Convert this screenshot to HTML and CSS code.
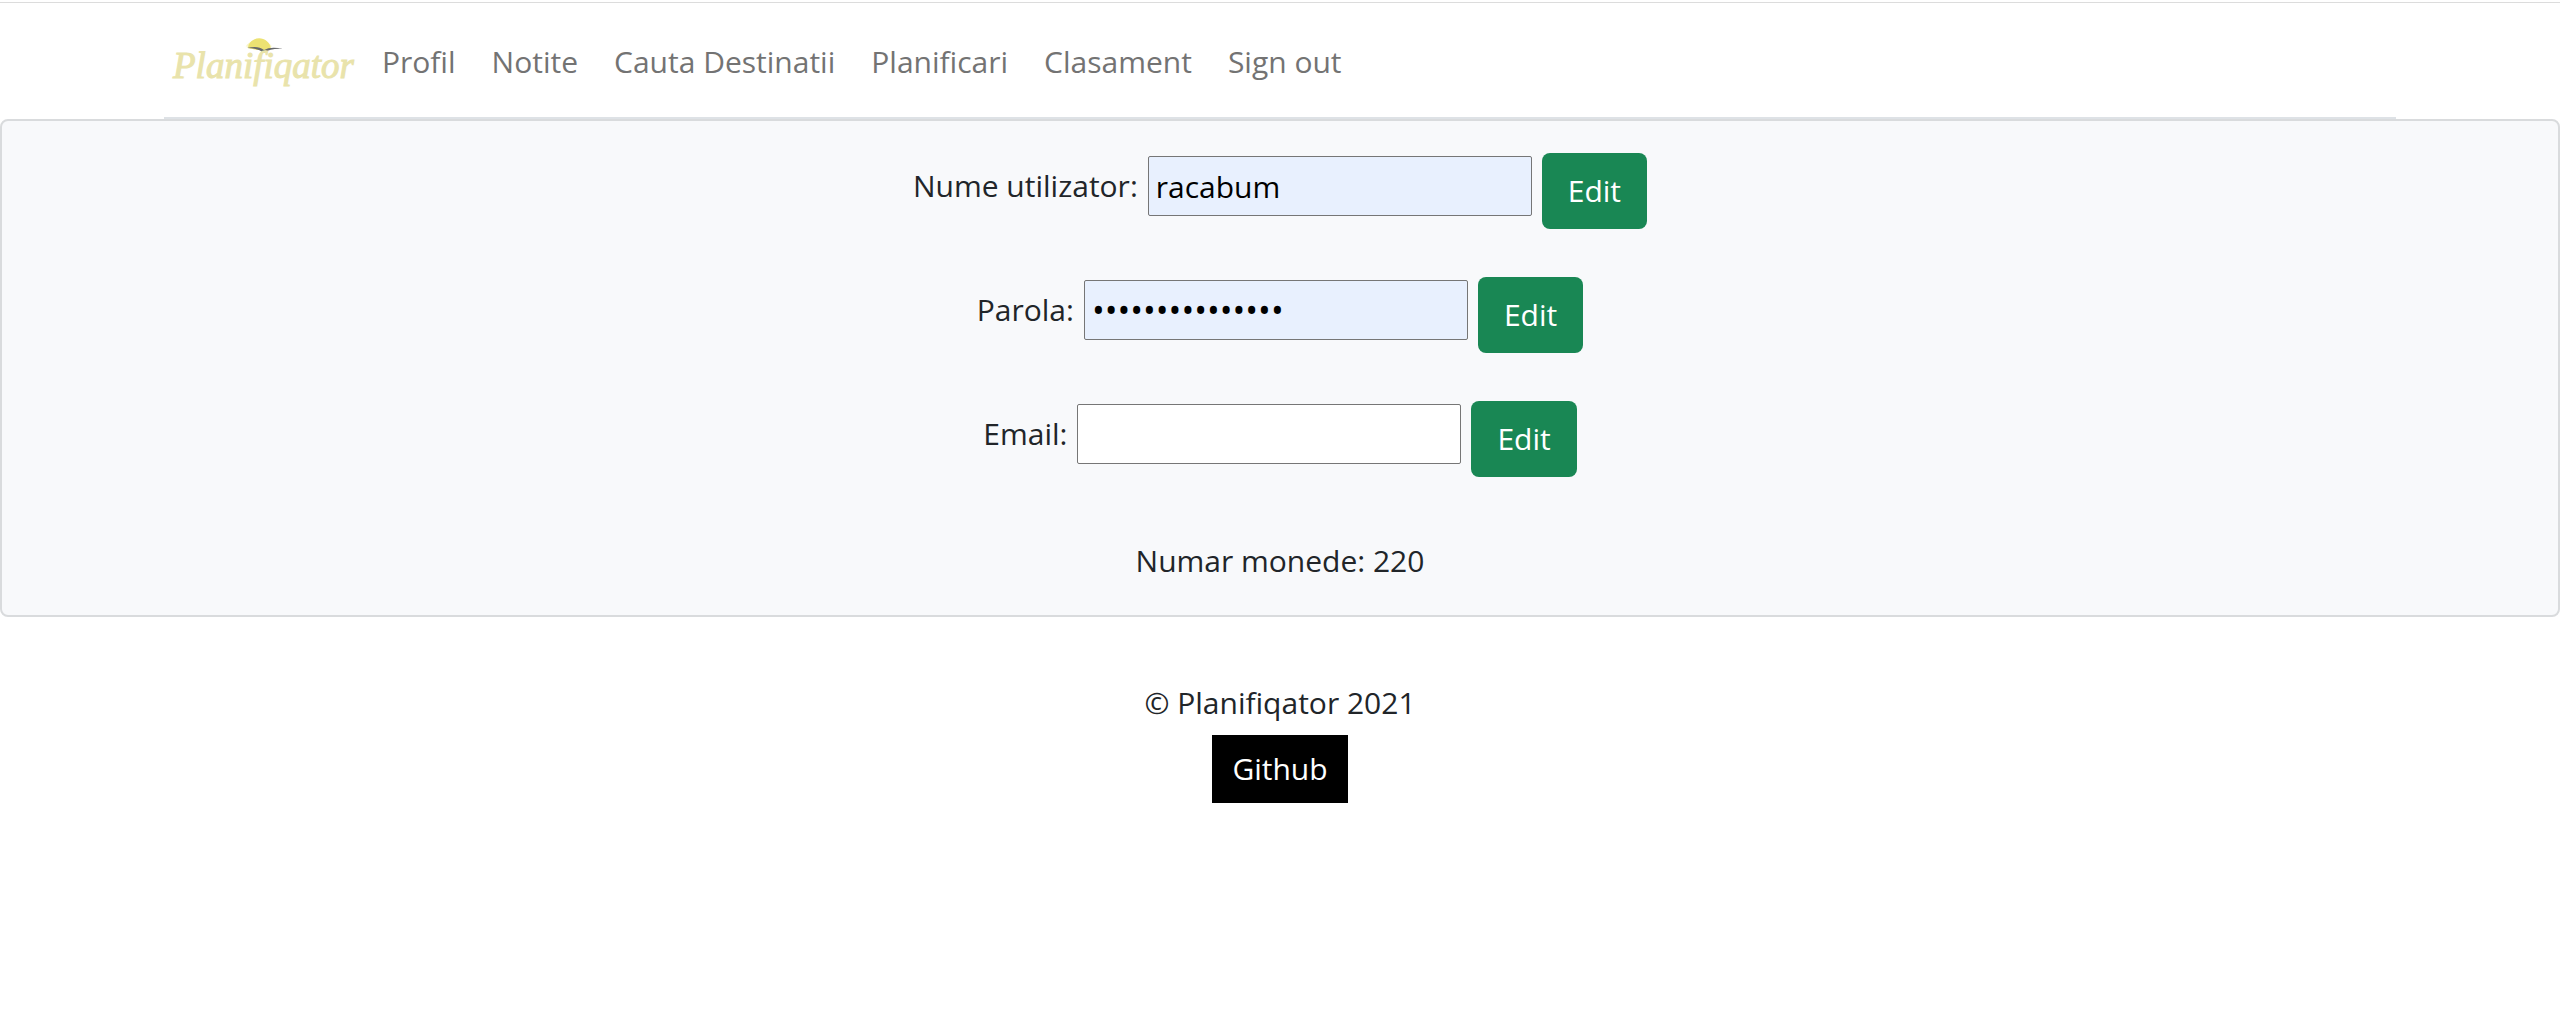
FILE: index.html
```html
<!DOCTYPE html>
<html lang="ro">
<head>
<meta charset="utf-8">
<title>Planifiqator - Profil</title>
<link rel="stylesheet" href="styles.css">
</head>
<body>
<header class="header">
  <nav class="navbar">
    <a class="brand" href="#" aria-label="Planifiqator">
      <svg class="logo" viewBox="0 0 192 64" width="192" height="64">
        <defs>
          <radialGradient id="glow"><stop offset="0.7" stop-color="#efe570" stop-opacity="0.5"/><stop offset="1" stop-color="#efe570" stop-opacity="0"/></radialGradient>
        </defs>
        <path d="M80 19a16 15 0 0 1 30 1l-13 0z" fill="url(#glow)"/>
        <path d="M84 18C86 5 105 5 107 19L100 20Q96 19 93 20Z" fill="#ece272"/>
        <path d="M83 18Q94 15 100 20Q107 16 119 19Q107 18 100 23Q94 18 83 18Z" fill="#66686a"/>
        <text class="logo-text" x="9" y="48">Planifiqator</text>
      </svg>
    </a>
    <a class="nav-link" href="#">Profil</a>
    <a class="nav-link" href="#">Notite</a>
    <a class="nav-link" href="#">Cauta Destinatii</a>
    <a class="nav-link" href="#">Planificari</a>
    <a class="nav-link" href="#">Clasament</a>
    <a class="nav-link" href="#">Sign out</a>
  </nav>
</header>
<main class="card">
  <form class="row">
    <div class="field">
      <label for="username">Nume utilizator:</label>
      <input class="input filled" id="username" type="text" value="racabum">
    </div>
    <button class="btn" type="button">Edit</button>
  </form>
  <form class="row">
    <div class="field">
      <label for="password">Parola:</label>
      <input class="input filled password" id="password" type="password" value="parolaparola123">
    </div>
    <button class="btn" type="button">Edit</button>
  </form>
  <form class="row">
    <div class="field">
      <label for="email">Email:</label>
      <input class="input" id="email" type="email">
    </div>
    <button class="btn" type="button">Edit</button>
  </form>
  <p class="coins">Numar monede: 220</p>
</main>
<footer class="footer">
  <p class="copyright">© Planifiqator 2021</p>
  <a class="github" href="#">Github</a>
</footer>
</body>
</html>
```
FILE: styles.css
```css
* {
  box-sizing: border-box;
}

body {
  margin: 0;
  background: #fff;
  color: #212529;
  font-family: "Open Sans", "Noto Sans", sans-serif;
  font-size: 30px;
  line-height: 48px;
}

.header {
  margin-top: 2px;
  padding: 0 164px;
  border-top: 1px solid #dcdcdc;
}

.navbar {
  display: flex;
  align-items: center;
  min-height: 116px;
  padding-top: 4px;
  border-bottom: 2px solid #dee2e6;
}

.brand {
  display: flex;
  margin-right: 8px;
}

.logo {
  overflow: visible;
}

.logo-text {
  fill: #e9e3ab;
  stroke: #e9e3ab;
  stroke-width: 1px;
  font-family: "Liberation Serif", serif;
  font-size: 37px;
  font-style: italic;
}

.nav-link {
  padding: 0 18px;
  color: #737373;
  text-decoration: none;
}

.card {
  display: flex;
  flex-direction: column;
  gap: 48px;
  padding: 32px 32px 30px;
  border: 2px solid #d9dbdd;
  border-radius: 8px;
  background: #f8f9fb;
}

.row {
  display: flex;
  justify-content: center;
  align-items: center;
  gap: 10px;
}

.field {
  display: flex;
  align-items: center;
  gap: 10px;
  padding-bottom: 10px;
}

.input {
  width: 384px;
  height: 60px;
  padding: 2px 7px;
  border: 1px solid #767676;
  border-radius: 2px;
  background: #fff;
  color: #000;
  font: inherit;
}

.filled {
  background: #e8f0fe;
}

.password {
  font-size: 34px;
}

.btn {
  height: 76px;
  padding: 0 26px;
  border: 0;
  border-radius: 8px;
  background: #198754;
  color: #fff;
  font: inherit;
}

.coins {
  margin: 12px 0 0;
  text-align: center;
}

.footer {
  display: flex;
  flex-direction: column;
  align-items: center;
  gap: 8px;
  padding-top: 62px;
}

.copyright {
  margin: 0;
}

.github {
  padding: 10px 20px;
  background: #000;
  color: #fff;
  text-decoration: none;
}
```
